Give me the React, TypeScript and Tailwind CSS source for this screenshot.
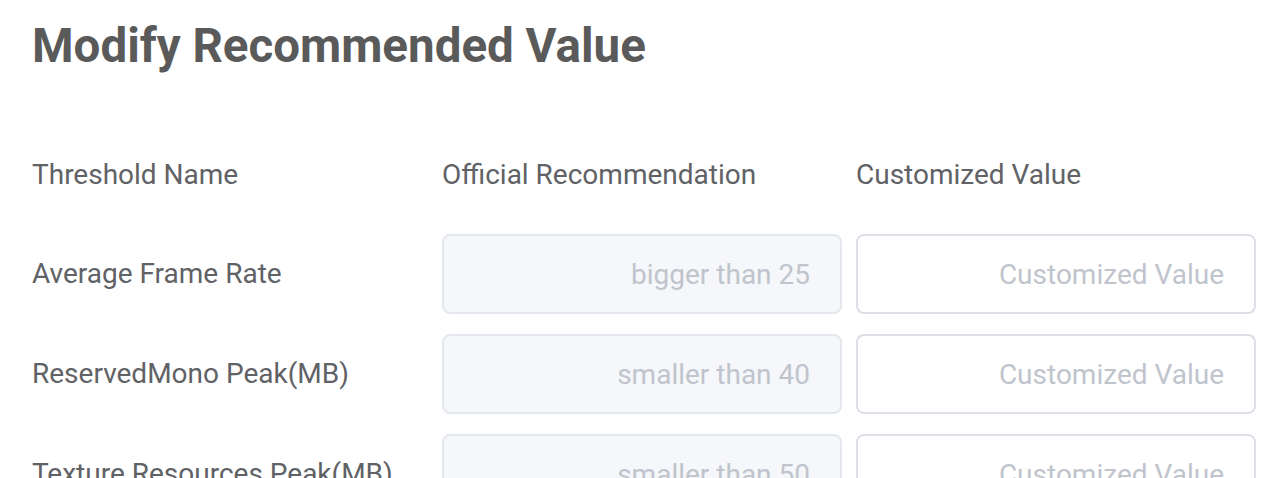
const rows = [
  { name: "Average Frame Rate", official: "bigger than 25" },
  { name: "ReservedMono Peak(MB)", official: "smaller than 40" },
  { name: "Texture Resources Peak(MB)", official: "smaller than 50" },
];

export default function App() {
  return (
    <div className="h-[478px] overflow-hidden bg-white pl-8 font-['Roboto',sans-serif] text-[#606266]">
      <h1 className="pt-[14px] text-[47.5px] font-bold leading-[64px] text-[#5a5a5a]">
        Modify Recommended Value
      </h1>

      <div className="mt-[79px] grid grid-cols-[396px_400px_400px] gap-x-[14px] text-[28px]">
        <div className="leading-[36px]">Threshold Name</div>
        <div className="leading-[36px]">Official Recommendation</div>
        <div className="leading-[36px]">Customized Value</div>
      </div>

      <div className="mt-[41px] flex flex-col gap-5">
        {rows.map((r) => (
          <div key={r.name} className="grid grid-cols-[396px_400px_400px] items-center gap-x-[14px] text-[28px]">
            <div>{r.name}</div>
            <input
              disabled
              placeholder={r.official}
              className="h-20 rounded-lg border-2 border-[#e4e7ed] bg-[#f5f7fa] px-[30px] text-right text-[28px] outline-none placeholder:text-[#c0c4cc]"
            />
            <input
              placeholder="Customized Value"
              className="h-20 rounded-lg border-2 border-[#dcdfe6] bg-white px-[30px] text-right text-[28px] outline-none placeholder:text-[#c0c4cc]"
            />
          </div>
        ))}
      </div>
    </div>
  );
}
